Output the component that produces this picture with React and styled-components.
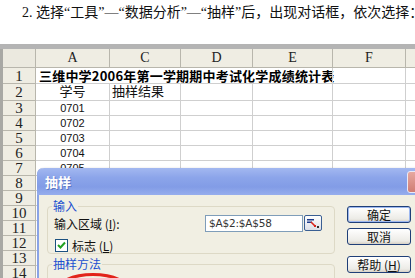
import React from 'react';
import styled, { createGlobalStyle } from 'styled-components';

const GlobalStyle = createGlobalStyle`
  html, body {
    margin: 0;
    padding: 0;
    background: #ffffff;
    overflow: hidden;
  }
`;

const Page = styled.div`
  width: 415px;
  height: 278px;
  overflow: hidden;
  display: flex;
  flex-direction: column;
`;

const Caption = styled.p`
  margin: 0;
  padding: 4px 0 0 22px;
  height: 44px;
  flex-shrink: 0;
  box-sizing: border-box;
  white-space: nowrap;
  font-family: "Liberation Serif", "Noto Sans CJK SC", serif;
  font-size: 14px;
  line-height: 17px;
  color: #111;
`;

// Excel 工作表
const Sheet = styled.div`
  position: relative;
  flex: 1;
  overflow: hidden;
  border-top: 5px solid #b4b4b4;
  background: #fff;
`;

const Grid = styled.div`
  display: grid;
  grid-template-columns: 3px 33px 74px 71px 72px 80px 73px 40px;
  grid-template-rows: 19px 16px 17px repeat(12, 15px);
`;

const Strip = styled.div`
  background: #a8a8a4;
`;

const Head = styled.div`
  background: ${({ $corner }) => ($corner ? '#ebe9df' : '#efede3')};
  border-right: 1px solid #b8b6ac;
  border-bottom: 1px solid #b8b6ac;
  display: flex;
  align-items: center;
  justify-content: center;
  font-family: "Liberation Serif", serif;
  font-size: 14px;
  color: #222;
`;

const RowNum = styled.div`
  background: #efede3;
  border-right: 1px solid #b8b6ac;
  border-bottom: 1px solid #b8b6ac;
  display: flex;
  align-items: center;
  justify-content: center;
  overflow: hidden;
  font-family: "Liberation Serif", serif;
  font-size: 15px;
  line-height: 14px;
  color: #222;
`;

const Cell = styled.div`
  border-right: 1px solid #cfcfcf;
  border-bottom: 1px solid #cfcfcf;
  display: flex;
  align-items: center;
  justify-content: ${({ $center }) => ($center ? 'center' : 'flex-start')};
  padding-left: ${({ $center }) => ($center ? '0' : '2px')};
  font-family: "Liberation Sans", "Noto Sans CJK SC", sans-serif;
  font-size: ${({ $cjk }) => ($cjk ? '13px' : '11px')};
  line-height: 14px;
  color: #111;
  white-space: nowrap;
  overflow: hidden;
`;

const TitleCell = styled.div`
  grid-column: 3 / span 5;
  border-bottom: 1px solid #cfcfcf;
  border-right: 1px solid #cfcfcf;
  display: flex;
  align-items: center;
  padding-left: 3px;
  font-family: "Noto Sans CJK SC", sans-serif;
  font-weight: bold;
  font-size: 13px;
  line-height: 14px;
  letter-spacing: 0.2px;
  color: #000;
  white-space: nowrap;
  position: relative;
`;

const TitleFill = styled.div`
  position: absolute;
  left: 296px;
  top: 0;
  bottom: -1px;
  border-left: 1px solid #cfcfcf;
`;

// 抽样 对话框
const Dialog = styled.div`
  position: absolute;
  left: 37px;
  top: 119px;
  width: 400px;
  height: 140px;
  border: 2px solid #8aa3e6;
  border-top: none;
  border-radius: 6px 6px 0 0;
  background: #f1efe3;
  display: flex;
  flex-direction: column;
  box-shadow: 1px 0 2px rgba(0, 0, 0, 0.15);
`;

const TitleBar = styled.div`
  height: 27px;
  flex-shrink: 0;
  margin: 0 -2px;
  border-radius: 7px 7px 0 0;
  background: linear-gradient(#a3b8f0 0%, #8ca5ea 35%, #829ce6 70%, #96aded 100%);
  display: flex;
  align-items: center;
  padding: 0 0 0 8px;
  font-family: "Noto Sans CJK SC", sans-serif;
  font-weight: bold;
  font-size: 13px;
  color: #ffffff;
  text-shadow: 1px 1px 0 #5e77c4;
`;

const CloseBtn = styled.div`
  margin-left: 336px;
  width: 20px;
  height: 20px;
  flex-shrink: 0;
  border: 1px solid #e9e9f6;
  border-radius: 3px;
  background: linear-gradient(#e6a8a0, #d07d74);
`;

const Body = styled.div`
  display: flex;
  gap: 12px;
  padding: 4px 0 0 8px;
`;

const Groups = styled.div`
  width: 288px;
  display: flex;
  flex-direction: column;
  gap: 3px;
`;

const Group = styled.fieldset`
  margin: 0;
  padding: 0 0 4px 6px;
  border: 1px solid #ddd9c6;
  border-radius: 4px;
  height: ${({ $h }) => $h}px;
  box-sizing: border-box;
`;

const Legend = styled.legend`
  padding: 0 1px;
  margin-left: -2px;
  font-family: "Noto Sans CJK SC", sans-serif;
  font-size: 12px;
  line-height: 14px;
  color: #1b4fd0;
`;

const FieldRow = styled.div`
  display: flex;
  align-items: center;
  height: 18px;
  margin-top: ${({ $mt }) => $mt || 0}px;
  font-family: "Noto Sans CJK SC", sans-serif;
  font-size: 12px;
  color: #111;
`;

const Label = styled.span`
  width: 151px;
  white-space: nowrap;
`;

const Key = styled.span`
  text-decoration: underline;
`;

const RefInput = styled.div`
  width: 98px;
  height: 17px;
  border: 1px solid #7f9db9;
  background: #fff;
  display: flex;
  align-items: center;
  padding-left: 3px;
  box-sizing: border-box;
  font-family: "DejaVu Sans", sans-serif;
  font-size: 10.5px;
  letter-spacing: -0.2px;
  color: #333;
`;

const RangeBtn = styled.div`
  width: 18px;
  height: 16px;
  margin-left: 1px;
  border: 1px solid #3a5f93;
  border-radius: 2px;
  background: linear-gradient(#ffffff, #dcdfe8);
  display: flex;
  align-items: center;
  justify-content: center;
  box-sizing: border-box;
`;

const CheckBox = styled.div`
  width: 11px;
  height: 11px;
  margin-left: 1px;
  margin-right: 4px;
  border: 1px solid #1c5180;
  background: #fff;
  display: flex;
  align-items: center;
  justify-content: center;
`;

const Buttons = styled.div`
  display: flex;
  flex-direction: column;
  gap: 5px;
  padding-top: 7px;
`;

const Button = styled.div`
  width: 64px;
  height: 17px;
  box-sizing: border-box;
  margin-top: ${({ $gap }) => $gap || 0}px;
  border: 1px solid #1f3f78;
  border-radius: 3px;
  background: linear-gradient(#ffffff, #ecebe6 80%, #d6d0c5);
  box-shadow: ${({ $default }) => ($default ? 'inset 0 0 0 1px #9db8f0' : 'none')};
  display: flex;
  align-items: center;
  justify-content: center;
  font-family: "Noto Sans CJK SC", sans-serif;
  font-size: 12px;
  color: #111;
`;

const Oval = styled.div`
  position: absolute;
  left: 16px;
  top: 105px;
  width: 70px;
  height: 30px;
  border: 3px solid #e2231a;
  border-radius: 50%;
`;

const rows = [
  { n: 3, id: '0701' },
  { n: 4, id: '0702' },
  { n: 5, id: '0703' },
  { n: 6, id: '0704' },
  { n: 7, id: '0705' },
];

const RangeIcon = () => (
  <svg width="12" height="9" viewBox="0 0 12 9">
    <rect x="0" y="0" width="7" height="1.5" fill="#1d3c8c" />
    <rect x="0" y="2.5" width="5" height="1.5" fill="#1d3c8c" />
    <path d="M4 3 L8 7" stroke="#d8231c" strokeWidth="1.6" />
    <rect x="7" y="6" width="2" height="2" fill="#d8231c" />
    <rect x="10" y="7" width="2" height="2" fill="#333" />
  </svg>
);

const Tick = () => (
  <svg width="9" height="8" viewBox="0 0 9 8">
    <path d="M1 4 L3.5 6.5 L8 1.5" fill="none" stroke="#21a121" strokeWidth="2" />
  </svg>
);

const App = () => {
  const letters = ['A', 'C', 'D', 'E', 'F', ''];

  return (
    <Page>
      <GlobalStyle />
      <Caption>2. 选择“工具”—“数据分析”—“抽样”后，出现对话框，依次选择：</Caption>
      <Sheet>
        <Grid>
          <Strip />
          <Head $corner />
          {letters.map((l, i) => (
            <Head key={i}>{l}</Head>
          ))}

          <Strip />
          <RowNum>1</RowNum>
          <TitleCell>
            三维中学2006年第一学期期中考试化学成绩统计表
            <TitleFill />
          </TitleCell>
          <Cell />

          <Strip />
          <RowNum>2</RowNum>
          <Cell $center $cjk>学号</Cell>
          <Cell $cjk>抽样结果</Cell>
          <Cell />
          <Cell />
          <Cell />
          <Cell />

          {rows.map((r) => (
            <React.Fragment key={r.n}>
              <Strip />
              <RowNum>{r.n}</RowNum>
              <Cell $center>{r.id}</Cell>
              <Cell />
              <Cell />
              <Cell />
              <Cell />
              <Cell />
            </React.Fragment>
          ))}

          {[8, 9, 10, 11, 12, 13, 14].map((n) => (
            <React.Fragment key={n}>
              <Strip />
              <RowNum>{n}</RowNum>
              <Cell />
              <Cell />
              <Cell />
              <Cell />
              <Cell />
              <Cell />
            </React.Fragment>
          ))}
        </Grid>

        <Dialog>
          <TitleBar>
            抽样
            <CloseBtn />
          </TitleBar>
          <Body>
            <Groups>
              <Group $h={55}>
                <Legend>输入</Legend>
                <FieldRow $mt={1}>
                  <Label>
                    输入区域 (<Key>I</Key>):
                  </Label>
                  <RefInput>$A$2:$A$58</RefInput>
                  <RangeBtn>
                    <RangeIcon />
                  </RangeBtn>
                </FieldRow>
                <FieldRow $mt={4}>
                  <CheckBox>
                    <Tick />
                  </CheckBox>
                  标志 (<Key>L</Key>)
                </FieldRow>
              </Group>
              <Group $h={40}>
                <Legend>抽样方法</Legend>
              </Group>
            </Groups>
            <Buttons>
              <Button $default>确定</Button>
              <Button>取消</Button>
              <Button $gap={6}>
                帮助 (<Key>H</Key>)
              </Button>
            </Buttons>
          </Body>
          <Oval />
        </Dialog>
      </Sheet>
    </Page>
  );
};

export default App;
